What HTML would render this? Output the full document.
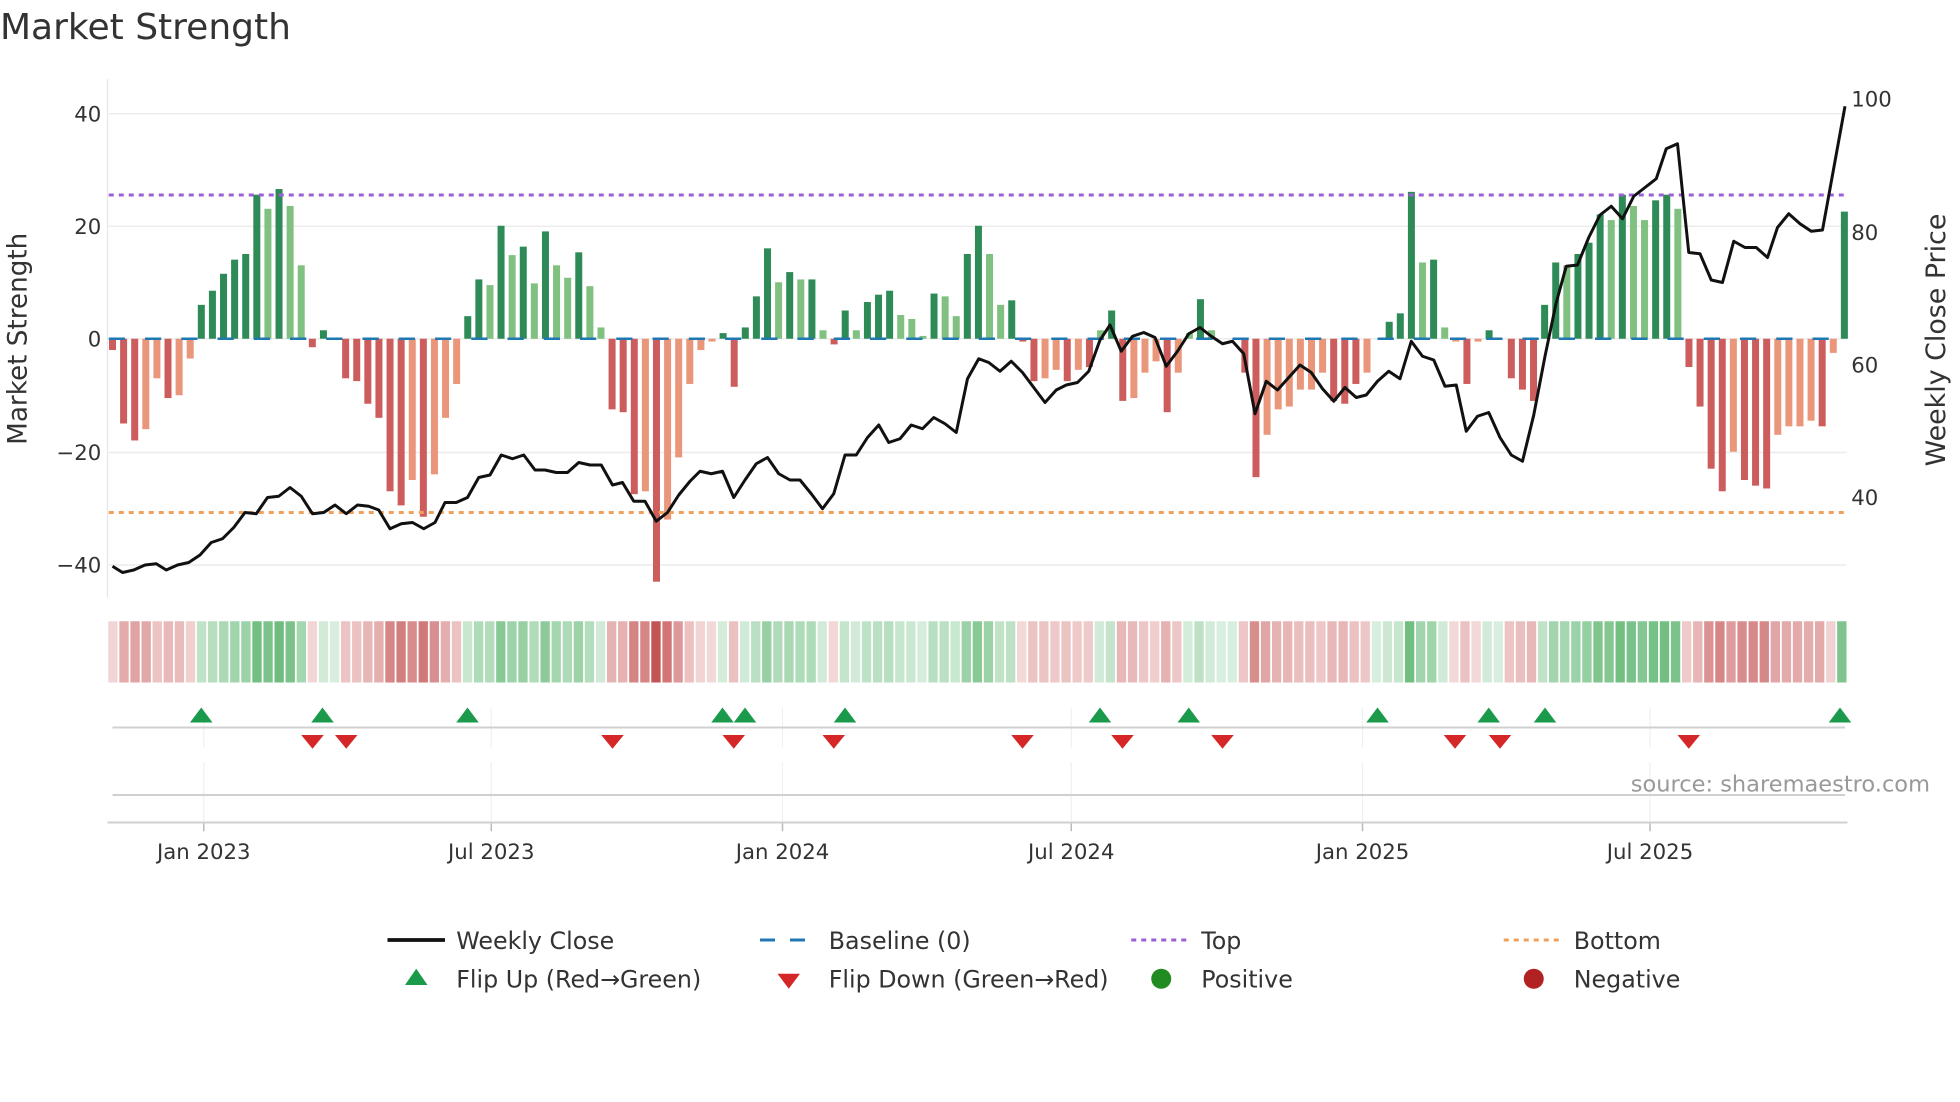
<!DOCTYPE html>
<html><head><meta charset="utf-8"><style>
html,body{margin:0;padding:0;background:#fff;width:1960px;height:1102px;overflow:hidden}
svg{display:block}
text{font-family:"DejaVu Sans","Liberation Sans",sans-serif;fill:#333}
</style></head><body>
<svg id="s" xmlns="http://www.w3.org/2000/svg" width="1960" height="1102" viewBox="0 0 1568 881.6">
<text x="0" y="31" font-size="28.8" fill="#333">Market Strength</text>
<g id="grid"></g>
<g id="heat"></g>
<g id="bars"></g>
<line x1="87" y1="271" x2="1477" y2="271" stroke="#1f77b4" stroke-width="2" stroke-dasharray="13 16"/>
<line x1="87" y1="156" x2="1477" y2="156" stroke="#9b5fd6" stroke-width="2.4" stroke-dasharray="4 4"/>
<line x1="87" y1="410" x2="1477" y2="410" stroke="#f0a05a" stroke-width="2.4" stroke-dasharray="4 4"/>
<polyline id="price" fill="none" stroke="#111" stroke-width="2.4" stroke-linejoin="round"/>
<g id="marks"></g>
<g font-size="17" text-anchor="end">
<text x="81" y="97">40</text><text x="81" y="187">20</text><text x="81" y="277">0</text><text x="81" y="368">−20</text><text x="81" y="458">−40</text>
</g>
<g font-size="17">
<text x="1481" y="85">100</text><text x="1481" y="192">80</text><text x="1481" y="298">60</text><text x="1481" y="404">40</text>
</g>
<text transform="translate(21,271) rotate(-90)" font-size="21" text-anchor="middle">Market Strength</text>
<text transform="translate(1556,272) rotate(-90)" font-size="21.5" text-anchor="middle">Weekly Close Price</text>
<g font-size="17" text-anchor="middle">
<text x="163" y="687">Jan 2023</text><text x="393" y="687">Jul 2023</text><text x="626" y="687">Jan 2024</text><text x="857" y="687">Jul 2024</text><text x="1090" y="687">Jan 2025</text><text x="1320" y="687">Jul 2025</text>
</g>
<text x="1544" y="633" font-size="18" text-anchor="end" fill="#999" style="fill:#999">source: sharemaestro.com</text>
<g font-size="19">
<line x1="310" y1="752" x2="356" y2="752" stroke="#111" stroke-width="3"/>
<text x="365" y="759">Weekly Close</text>
<line x1="608" y1="752" x2="652" y2="752" stroke="#1f77b4" stroke-width="2.4" stroke-dasharray="12 12"/>
<text x="663" y="759">Baseline (0)</text>
<line x1="905" y1="752" x2="949" y2="752" stroke="#9b5fd6" stroke-width="2.4" stroke-dasharray="4 4"/>
<text x="961" y="759">Top</text>
<line x1="1203" y1="752" x2="1247" y2="752" stroke="#f0a05a" stroke-width="2.4" stroke-dasharray="4 4"/>
<text x="1259" y="759">Bottom</text>
<polygon points="324,788 342,788 333,775" fill="#1a9a4a"/>
<text x="365" y="790">Flip Up (Red→Green)</text>
<polygon points="622,779 640,779 631,791" fill="#d62728"/>
<text x="663" y="790">Flip Down (Green→Red)</text>
<circle cx="929" cy="783" r="8" fill="#228b22"/>
<text x="961" y="790">Positive</text>
<circle cx="1227" cy="783" r="8" fill="#b22222"/>
<text x="1259" y="790">Negative</text>
</g>
</svg>
<script>
(function(){
var NS="http://www.w3.org/2000/svg";
function el(p,t,a){var e=document.createElementNS(NS,t);for(var k in a)e.setAttribute(k,a[k]);p.appendChild(e);return e;}
var raw="-2r,-15r,-18r,-16o,-7o,-10.5r,-10o,-3.5o,6D,8.5D,11.5D,14D,15D,25.5D,23L,26.5D,23.5L,13L,-1.5r,1.5D,0L,-7r,-7.5r,-11.5r,-14r,-27r,-29.5r,-25o,-31.5r,-24o,-14o,-8o,4D,10.5D,9.5L,20D,14.8L,16.3D,9.8L,19D,13L,10.8L,15.3D,9.3L,2L,-12.5r,-13r,-27.5r,-27o,-43r,-32o,-21o,-8o,-2o,-0.5o,1D,-8.5r,2D,7.5D,16D,10L,11.8D,10.5L,10.5D,1.5L,-1r,5D,1.5L,6.5D,7.8D,8.5D,4.2L,3.5L,0.5L,8D,7.5L,4L,15D,20D,15L,6L,6.8D,-0.5r,-7.5r,-7o,-5.5o,-7.5r,-5.5o,-5r,1.5L,5D,-11r,-10.5o,-6o,-4o,-13r,-6o,1L,7D,1.5L,0L,0L,-6r,-24.5r,-17o,-12.5o,-12o,-9o,-9o,-6o,-11r,-11.5r,-8r,-6o,0L,3D,4.5D,26D,13.5L,14D,2L,-0.5o,-8r,-0.5o,1.5D,0L,-7r,-9r,-11r,6D,13.5D,13L,15D,17D,22D,21L,25.5D,23.5L,21L,24.5D,25.5D,23L,-5r,-12r,-23r,-27r,-20o,-25r,-26r,-26.5r,-17o,-15.5o,-15.5o,-14.5o,-15.5r,-2.5o,22.5D".split(",");
var n=raw.length, x0=90, dx=(1475.5-90)/(n-1);
var grid=document.getElementById("grid"),bars=document.getElementById("bars"),heat=document.getElementById("heat"),marks=document.getElementById("marks");
[91,181,271,362,452].forEach(function(y){el(grid,"line",{x1:87,y1:y,x2:1477,y2:y,stroke:"#ececec","stroke-width":1.2});});
el(grid,"line",{x1:86,y1:63,x2:86,y2:478,stroke:"#e6e6e6","stroke-width":1});
[163,393,626,857,1090,1320].forEach(function(x){
 el(grid,"line",{x1:x,y1:566,x2:x,y2:598,stroke:"#eef0f2","stroke-width":1});
 el(grid,"line",{x1:x,y1:610,x2:x,y2:658,stroke:"#eef0f2","stroke-width":1});
 el(grid,"line",{x1:x,y1:658,x2:x,y2:665,stroke:"#bbb","stroke-width":1.2});
});
el(grid,"line",{x1:90,y1:582,x2:1476,y2:582,stroke:"#d0d0d0","stroke-width":1.6});
el(grid,"line",{x1:90,y1:636,x2:1476,y2:636,stroke:"#d0d0d0","stroke-width":1.6});
el(grid,"line",{x1:86,y1:658,x2:1478,y2:658,stroke:"#d0d0d0","stroke-width":1.6});
var col={D:"#2e8b57",L:"#80c080",r:"#cd5c5c",o:"#e9967a"};
function mix(a,b,t){var r=[0,1,2].map(function(i){return Math.round(a[i]+(b[i]-a[i])*t);});return "rgb("+r.join(",")+")";}
var hw=(1478-86)/n;
for(var i=0;i<n;i++){
 var s=raw[i],t=s.slice(-1),v=parseFloat(s),x=x0+i*dx,y=271-v*4.52;
 if(Math.abs(v)>0.01) el(bars,"rect",{x:x-2.8,y:Math.min(y,271),width:5.6,height:Math.abs(v*4.52),fill:col[t]});
 var c;
 if(v>=0){c=mix([216,238,222],[108,188,124],Math.min(v/27,1));}
 else{c=mix([244,218,218],[196,84,84],Math.min(-v/43,1));}
 el(heat,"rect",{x:86+i*hw+0.6,y:497,width:hw-1.4,height:49,fill:c});
}
var pts=[[90,453],[98,458],[107,456],[116,452],[125,451],[133,456],[142,452],[151,450],[160,444],[169,434],[178,431],[187,422],[196,410],[205,411],[214,398],[223,397],[232,390],[241,397],[250,411],[259,410],[268,404],[277,411],[286,404],[295,405],[303,408],[312,423],[321,419],[330,418],[339,423],[348,418],[356,402],[365,402],[374,398],[383,382],[392,380],[401,364],[410,367],[419,364],[428,376],[436,376],[445,378],[454,378],[463,370],[472,372],[481,372],[490,388],[498,386],[507,401],[516,401],[525,417],[534,410],[543,396],[552,385],[560,377],[569,379],[578,377],[587,398],[596,384],[605,371],[614,366],[623,379],[632,384],[640,384],[649,395],[658,407],[667,395],[676,364],[685,364],[694,350],[703,340],[711,354],[720,351],[729,340],[738,343],[747,334],[756,339],[765,346],[774,303],[783,287],[791,290],[800,297],[809,289],[818,298],[827,310],[836,322],[845,312],[853,308],[862,306],[871,297],[880,272],[888,260],[897,281],[906,269],[915,266],[924,270],[933,293],[942,281],[951,267],[960,262],[969,269],[978,275],[986,273],[995,283],[1004,331],[1013,305],[1022,312],[1031,302],[1040,292],[1049,298],[1058,311],[1067,321],[1076,310],[1085,318],[1093,316],[1102,305],[1111,297],[1120,303],[1129,273],[1138,285],[1147,288],[1156,309],[1165,308],[1173,345],[1182,333],[1191,330],[1200,350],[1209,364],[1218,369],[1227,332],[1236,285],[1245,242],[1253,213],[1262,212],[1271,190],[1280,172],[1289,165],[1298,175],[1307,157],[1316,150],[1325,143],[1333,119],[1342,115],[1351,202],[1360,203],[1369,224],[1378,226],[1387,193],[1396,198],[1405,198],[1414,206],[1422,182],[1431,171],[1440,179],[1449,185],[1458,184],[1476,85]];
document.getElementById("price").setAttribute("points",pts.map(function(p){return p.join(",");}).join(" "));
[161,258,374,578,596,676,880,951,1102,1191,1236,1472].forEach(function(x){el(marks,"polygon",{points:(x-9)+",578 "+(x+9)+",578 "+x+",566",fill:"#1a9a4a"});});
[250,277,490,587,667,818,898,978,1164,1200,1351].forEach(function(x){el(marks,"polygon",{points:(x-9)+",588 "+(x+9)+",588 "+x+",599",fill:"#d62728"});});
})();
</script>
</body></html>
